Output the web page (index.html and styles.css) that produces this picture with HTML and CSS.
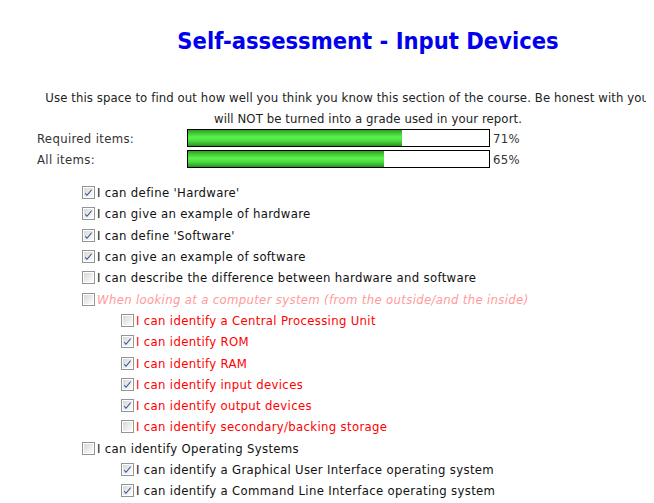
FILE: index.html
```html
<!DOCTYPE html>
<html>
<head>
<meta charset="utf-8">
<title>Self-assessment - Input Devices</title>
<link rel="stylesheet" href="styles.css">
</head>
<body>
<div class="page">
  <h1 class="title">Self-assessment - Input Devices</h1>
  <p class="intro">Use this space to find out how well you think you know this section of the course. Be honest with yourself, it will NOT be turned into a grade used in your report.</p>
  <div class="stats">
    <div class="stat-label">Required items:</div>
    <div class="bar"><div class="fill" style="width:71%"></div></div>
    <div class="pct">71%</div>
    <div class="stat-label">All items:</div>
    <div class="bar"><div class="fill" style="width:65%"></div></div>
    <div class="pct">65%</div>
  </div>
  <ul class="checklist">
    <li class="item"><span class="cb on"><svg viewBox="0 0 13 13"><use href="#box"/><use href="#tick"/></svg></span><span>I can define 'Hardware'</span></li>
    <li class="item"><span class="cb on"><svg viewBox="0 0 13 13"><use href="#box"/><use href="#tick"/></svg></span><span>I can give an example of hardware</span></li>
    <li class="item"><span class="cb on"><svg viewBox="0 0 13 13"><use href="#box"/><use href="#tick"/></svg></span><span>I can define 'Software'</span></li>
    <li class="item"><span class="cb on"><svg viewBox="0 0 13 13"><use href="#box"/><use href="#tick"/></svg></span><span>I can give an example of software</span></li>
    <li class="item"><span class="cb"><svg viewBox="0 0 13 13"><use href="#box"/></svg></span><span>I can describe the difference between hardware and software</span></li>
    <li class="item optional"><span class="cb"><svg viewBox="0 0 13 13"><use href="#box"/></svg></span><span>When looking at a computer system (from the outside/and the inside)</span></li>
    <li class="item sub red"><span class="cb"><svg viewBox="0 0 13 13"><use href="#box"/></svg></span><span>I can identify a Central Processing Unit</span></li>
    <li class="item sub red"><span class="cb on"><svg viewBox="0 0 13 13"><use href="#box"/><use href="#tick"/></svg></span><span>I can identify ROM</span></li>
    <li class="item sub red"><span class="cb on"><svg viewBox="0 0 13 13"><use href="#box"/><use href="#tick"/></svg></span><span>I can identify RAM</span></li>
    <li class="item sub red"><span class="cb on"><svg viewBox="0 0 13 13"><use href="#box"/><use href="#tick"/></svg></span><span>I can identify input devices</span></li>
    <li class="item sub red"><span class="cb on"><svg viewBox="0 0 13 13"><use href="#box"/><use href="#tick"/></svg></span><span>I can identify output devices</span></li>
    <li class="item sub red"><span class="cb"><svg viewBox="0 0 13 13"><use href="#box"/></svg></span><span>I can identify secondary/backing storage</span></li>
    <li class="item"><span class="cb"><svg viewBox="0 0 13 13"><use href="#box"/></svg></span><span>I can identify Operating Systems</span></li>
    <li class="item sub"><span class="cb on"><svg viewBox="0 0 13 13"><use href="#box"/><use href="#tick"/></svg></span><span>I can identify a Graphical User Interface operating system</span></li>
    <li class="item sub"><span class="cb on"><svg viewBox="0 0 13 13"><use href="#box"/><use href="#tick"/></svg></span><span>I can identify a Command Line Interface operating system</span></li>
  </ul>
</div>
<svg class="defs" width="0" height="0">
  <defs>
    <linearGradient id="cbg" x1="0" y1="0" x2="1" y2="1">
      <stop offset="0" stop-color="#d8d8d5"/>
      <stop offset="1" stop-color="#fcfcfb"/>
    </linearGradient>
    <g id="box">
      <rect x="0.5" y="0.5" width="12" height="12" fill="#ffffff" stroke="#939494"/>
      <rect x="2" y="2" width="9" height="9" fill="url(#cbg)"/>
    </g>
    <path id="tick" d="M3.2 6.6 L5 8.6 L9.6 3 L9.6 4.4 L5 10 L3.2 8 Z" fill="#2b4aa0"/>
  </defs>
</svg>
</body>
</html>
```
FILE: styles.css
```css
body {
  margin: 8px;
  background: #ffffff;
  font-family: "DejaVu Sans Condensed", "DejaVu Sans", sans-serif;
  font-size: 13px;
  letter-spacing: 0.33px;
  color: #222222;
}
.page {
  width: 720px;
}
.title {
  margin: 18px 0 0 0;
  text-align: center;
  font-size: 23.5px;
  line-height: 30px;
  font-weight: bold;
  letter-spacing: 0;
  color: #0000ee;
}
.intro {
  margin: 31px 0 0 0;
  padding: 0 26px;
  text-align: center;
  line-height: 21px;
  letter-spacing: 0.1px;
  color: #222222;
}
.stats {
  display: grid;
  grid-template-columns: 150px 303px auto;
  row-gap: 3px;
  align-items: center;
  margin: 0 0 0 29px;
}
.stat-label {
  color: #333333;
}
.bar {
  height: 16px;
  border: 1px solid #000000;
  background: #ffffff;
}
.fill {
  height: 100%;
  background: linear-gradient(to bottom, #2f9e24 0%, #46d23a 25%, #5cf24f 45%, #4fe043 65%, #37b82c 85%, #2a8f20 100%);
}
.pct {
  padding-left: 3px;
  color: #333333;
}
.checklist {
  list-style: none;
  margin: 14px 0 0 0;
  padding: 0 0 0 74px;
}
.item {
  display: flex;
  align-items: center;
  height: 21.3px;
  color: #111111;
}
.item.sub {
  padding-left: 39px;
}
.item.red {
  color: #ff0000;
}
.item.optional {
  color: #ff9a9a;
  font-style: italic;
}
.cb {
  display: block;
  width: 13px;
  height: 13px;
  margin-right: 2px;
  flex: none;
}
.cb svg {
  display: block;
  width: 13px;
  height: 13px;
}
.defs {
  position: absolute;
  width: 0;
  height: 0;
}
```
